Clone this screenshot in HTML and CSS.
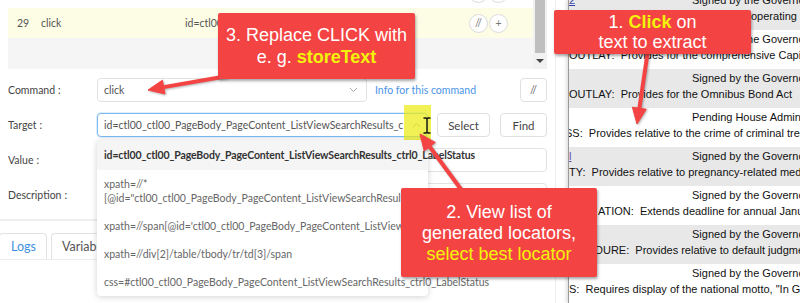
FILE: index.html
```html
<!DOCTYPE html>
<html lang="en">
<head>
    <meta charset="UTF-8">
    <meta name="viewport" content="width=device-width, initial-scale=1.0">
    <title>Extract text with storeText</title>
    <link rel="stylesheet" href="styles.css">
</head>
<body>
    <div class="screen">
        <div class="ide">
            <div class="grid">
                <div class="grid-body">
                    <div class="cmd-row prev">
                        <span class="row-btns"><span class="circle">//</span><span class="circle">+</span></span>
                    </div>
                    <div class="cmd-row current">
                        <span class="num">29</span>
                        <span class="cmd">click</span>
                        <span class="target">id=ctl00_ctl00_PageBody_PageContent_ListViewSearchResults_ctrl0_LabelStatus</span>
                        <span class="row-btns"><span class="circle">//</span><span class="circle">+</span></span>
                    </div>
                    <div class="grid-empty"></div>
                </div>
                <div class="scrollbar">
                    <div class="thumb"></div>
                    <div class="scroll-arrow"></div>
                </div>
            </div>

            <div class="form">
                <div class="form-row">
                    <label>Command<span class="colon">:</span></label>
                    <div class="field cmd-field">
                        click
                        <svg class="chevron" width="9" height="6" viewBox="0 0 9 6"><path d="M1 1 L4.5 4.5 L8 1" fill="none" stroke="#aaa" stroke-width="1"/></svg>
                    </div>
                    <a class="info">Info for this command</a>
                    <button class="btn btn-comment">//</button>
                </div>
                <div class="form-row">
                    <label>Target<span class="colon">:</span></label>
                    <div class="target-wrap">
                        <div class="field target-field">
                            <span class="field-text">id=ctl00_ctl00_PageBody_PageContent_ListViewSearchResults_ctrl0_LabelStatus</span>
                            <svg class="chevron" width="9" height="6" viewBox="0 0 9 6"><path d="M1 5 L4.5 1.5 L8 5" fill="none" stroke="#999" stroke-width="1"/></svg>
                        </div>
                        <div class="highlight"></div>
                        <svg class="ibeam" width="8" height="17" viewBox="0 0 8 17">
                            <path d="M0.5 1 H3 L4 2 L5 1 H7.5 M4 2 V15 M0.5 16 H3 L4 15 L5 16 H7.5" fill="none" stroke="#111" stroke-width="1.4"/>
                        </svg>
                        <div class="dropdown">
                            <div class="dd-item selected">id=ctl00_ctl00_PageBody_PageContent_ListViewSearchResults_ctrl0_LabelStatus</div>
                            <div class="dd-item">xpath=//*<br>[@id="ctl00_ctl00_PageBody_PageContent_ListViewSearchResults_ctrl0_LabelStatus"]</div>
                            <div class="dd-item">xpath=//span[@id='ctl00_ctl00_PageBody_PageContent_ListViewSearchResults_ctrl0_LabelStatus']</div>
                            <div class="dd-item">xpath=//div[2]/table/tbody/tr/td[3]/span</div>
                            <div class="dd-item">css=#ctl00_ctl00_PageBody_PageContent_ListViewSearchResults_ctrl0_LabelStatus</div>
                        </div>
                    </div>
                    <button class="btn btn-select">Select</button>
                    <button class="btn btn-find">Find</button>
                </div>
                <div class="form-row">
                    <label>Value<span class="colon">:</span></label>
                    <div class="field grow"></div>
                </div>
                <div class="form-row">
                    <label>Description<span class="colon">:</span></label>
                    <div class="field grow"></div>
                </div>
            </div>

            <div class="divider"></div>

            <div class="tabs">
                <div class="tab active">Logs</div>
                <div class="tab">Variables</div>
            </div>
        </div>

        <div class="gap"></div>

        <div class="web">
            <div class="bill">
                <div class="line"><span class="link">2</span><span>Signed by the Governor</span></div>
                <div class="desc shift-a">operating agreements</div>
            </div>
            <div class="bill">
                <div class="line"><span class="link"></span><span>Signed by the Governor</span></div>
                <div class="desc">OUTLAY:&nbsp; Provides for the comprehensive Capital Outlay budget</div>
            </div>
            <div class="bill">
                <div class="line"><span class="link"></span><span>Signed by the Governor</span></div>
                <div class="desc">OUTLAY:&nbsp; Provides for the Omnibus Bond Act</div>
            </div>
            <div class="bill">
                <div class="line"><span class="link"></span><span>Pending House Administration</span></div>
                <div class="desc shift-d">SS:&nbsp; Provides relative to the crime of criminal trespass</div>
            </div>
            <div class="bill">
                <div class="line"><span class="link visited">l</span><span>Signed by the Governor</span></div>
                <div class="desc">TY:&nbsp; Provides relative to pregnancy-related medical</div>
            </div>
            <div class="bill">
                <div class="line"><span class="link"></span><span>Signed by the Governor</span></div>
                <div class="desc shift-f">ATION:&nbsp; Extends deadline for annual January</div>
            </div>
            <div class="bill">
                <div class="line"><span class="link"></span><span>Signed by the Governor</span></div>
                <div class="desc shift-g">DURE:&nbsp; Provides relative to default judgments</div>
            </div>
            <div class="bill">
                <div class="line"><span class="link"></span><span>Signed by the Governor</span></div>
                <div class="desc">S:&nbsp; Requires display of the national motto, "In God We Trust"</div>
            </div>
        </div>

        <!-- annotation arrows -->
        <svg class="arrows" width="800" height="303" viewBox="0 0 800 303">
            <g fill="#f44343" stroke="#f44343">
                <line x1="648" y1="50" x2="639.3" y2="109" stroke-width="4"/>
                <polygon points="637,124 646.3,109.2 632.4,107.2" stroke-width="1"/>
                <line x1="463" y1="192" x2="429.7" y2="146.7" stroke-width="4"/>
                <polygon points="420,134 435.3,142.4 424.2,151" stroke-width="1"/>
                <line x1="228" y1="76" x2="163.7" y2="87.1" stroke-width="4"/>
                <polygon points="148,90 165,94 162.4,80.2" stroke-width="1"/>
            </g>
        </svg>

        <div class="callout callout-1">
            <div>1. <b>Click</b> on</div>
            <div>text to extract</div>
        </div>
        <div class="callout callout-3">
            <div>3. Replace CLICK with</div>
            <div>e. g. <b>storeText</b></div>
        </div>
        <div class="callout callout-2">
            <div>2. View list of</div>
            <div>generated locators,</div>
            <div class="hl">select best locator</div>
        </div>
    </div>
</body>
</html>
```

FILE: styles.css
```css
body {
    margin: 0;
    font-family: Lato, "Noto Sans", sans-serif;
    font-size: 10.5px;
    color: #555;
    background: #fff;
    overflow: hidden;
}

.screen {
    position: relative;
    display: flex;
    width: 800px;
    height: 303px;
    overflow: hidden;
}

/* ---------- IDE panel ---------- */
.ide {
    flex: none;
    width: 539px;
    padding: 0 8px;
    border-right: 1px solid #eeeeee;
}

.grid {
    display: flex;
    height: 69px;
}

.grid-body {
    flex: 1;
    overflow: hidden;
}

.cmd-row {
    display: flex;
    align-items: center;
    height: 30px;
    padding-left: 9px;
}

.cmd-row.prev {
    margin-top: -22px;
}

.cmd-row.current {
    background: #fdfde6;
}

.num {
    width: 24px;
}

.cmd {
    width: 144px;
}

.target {
    width: 225px;
    white-space: nowrap;
    overflow: hidden;
}

.row-btns {
    display: flex;
    gap: 1px;
    margin-left: auto;
    margin-right: 25px;
}

.circle {
    width: 17px;
    height: 17px;
    border: 1px solid #dcdcdc;
    border-radius: 50%;
    background: #fff;
    display: flex;
    align-items: center;
    justify-content: center;
    color: #777;
    font-size: 10.5px;
}

.grid-empty {
    height: 31px;
    background: #f5f5f5;
}

.scrollbar {
    width: 14px;
    background: #f1f1f1;
    display: flex;
    flex-direction: column;
    align-items: center;
}

.thumb {
    width: 10px;
    height: 53px;
    background: #bfbfbf;
}

.scroll-arrow {
    margin-top: 6px;
    width: 0;
    height: 0;
    border-left: 4px solid transparent;
    border-right: 4px solid transparent;
    border-top: 4px solid #444;
}

/* ---------- form ---------- */
.form {
    display: flex;
    flex-direction: column;
    gap: 11px;
    padding-top: 9px;
}

.form-row {
    display: flex;
    align-items: center;
    height: 24px;
}

.form-row label {
    flex: none;
    width: 89px;
    color: #444;
}

.colon {
    margin-left: 3px;
}

.field {
    box-sizing: border-box;
    height: 24px;
    border: 1px solid #e2e2e2;
    border-radius: 4px;
    background: #fff;
    padding: 0 6px;
    display: flex;
    align-items: center;
    color: #555;
    white-space: nowrap;
}

.field.grow {
    flex: 1;
}

.cmd-field {
    width: 270px;
    justify-content: space-between;
    padding-right: 8px;
}

.info {
    margin-left: 8px;
    color: #4a94e6;
}

.btn {
    box-sizing: border-box;
    height: 24px;
    border: 1px solid #e0e0e0;
    border-radius: 4px;
    background: #fff;
    font-family: Lato, "Noto Sans", sans-serif;
    font-size: 11.5px;
    color: #444;
    padding: 0;
}

.btn-comment {
    margin-left: auto;
    width: 27px;
    font-size: 10.5px;
    color: #666;
}

.btn-select {
    margin-left: 9px;
    width: 53px;
}

.btn-find {
    margin-left: 10px;
    width: 47px;
}

.target-wrap {
    position: relative;
    width: 331px;
    height: 24px;
}

.target-field {
    width: 331px;
    border-color: #7dbaf2;
    box-shadow: 0 0 0 1px rgba(125, 186, 242, 0.25);
    padding-right: 24px;
}

.field-text {
    overflow: hidden;
    flex: 1;
}

.target-field .chevron {
    position: absolute;
    right: 7px;
    top: 9px;
}

.highlight {
    position: absolute;
    left: 307px;
    top: -8px;
    width: 27px;
    height: 40px;
    background: rgba(236, 236, 20, 0.72);
}

.ibeam {
    position: absolute;
    left: 326px;
    top: 4px;
}

.dropdown {
    position: absolute;
    left: 0;
    top: 27px;
    width: 331px;
    background: #fff;
    border-radius: 4px;
    box-shadow: 0 1px 6px rgba(0, 0, 0, 0.18);
    z-index: 3;
}

.dd-item {
    padding: 7px 7px;
    line-height: 14px;
    white-space: nowrap;
    color: #666;
}

.dd-item.selected {
    padding: 8px 7px;
    background: #f5f5f5;
    color: #333;
    font-weight: 700;
    letter-spacing: -0.12px;
    border-radius: 4px 4px 0 0;
}

.divider {
    margin: 12px -8px 0;
    height: 2px;
    background: #eeeeee;
}

.tabs {
    display: flex;
    gap: 4px;
    margin: 12px 0 0 -9px;
    border-bottom: 1px solid #ececec;
}

.tab {
    height: 25px;
    line-height: 25px;
    padding: 0 10px;
    border: 1px solid #e3e3e3;
    border-bottom: none;
    border-radius: 4px 4px 0 0;
    font-size: 12.5px;
    color: #555;
}

.tab.active {
    color: #3d8fe0;
    padding: 0 10px 0 11px;
}

/* ---------- web page ---------- */
.gap {
    flex: none;
    width: 12px;
}

.web {
    flex: 1;
    min-width: 0;
    overflow: hidden;
    border-left: 1px solid #9a9a9a;
    box-shadow: -2px 0 3px rgba(0, 0, 0, 0.12);
    font-family: "Liberation Sans", Arial, sans-serif;
    font-size: 11px;
    color: #111;
}

.bill {
    box-sizing: border-box;
    height: 39px;
    padding-top: 1px;
    line-height: 16px;
    white-space: nowrap;
}

.bill:first-child {
    margin-top: -9px;
}

.bill:nth-child(odd) {
    background: #e8e8e8;
}

.line {
    display: flex;
}

.link {
    flex: none;
    width: 123px;
    color: #3344aa;
    text-decoration: underline;
}

.link.visited {
    color: #6a4fb0;
}

.shift-a {
    padding-left: 182px;
}

.shift-d {
    margin-left: -4px;
}

.shift-f {
    padding-left: 29px;
}

.shift-g {
    padding-left: 26px;
}

/* ---------- annotations ---------- */
.arrows {
    position: absolute;
    left: 0;
    top: 0;
    z-index: 4;
    filter: drop-shadow(1px 1px 1px rgba(0, 0, 0, 0.3));
}

.callout {
    position: absolute;
    z-index: 5;
    box-sizing: border-box;
    background: #f44343;
    color: #fff;
    font-family: "Liberation Sans", Arial, sans-serif;
    font-size: 18px;
    text-align: center;
    border-radius: 2px;
    box-shadow: 1px 2px 3px rgba(0, 0, 0, 0.35);
}

.callout b,
.callout .hl {
    color: #f2f20a;
}

.callout-1 {
    left: 554px;
    top: 10px;
    width: 197px;
    height: 44px;
    padding-top: 2px;
    line-height: 20px;
}

.callout-3 {
    left: 218px;
    top: 13px;
    width: 197px;
    height: 66px;
    padding-top: 11px;
    line-height: 22px;
}

.callout-2 {
    left: 401px;
    top: 188px;
    width: 196px;
    height: 89px;
    padding-top: 14px;
    line-height: 21px;
}
```
